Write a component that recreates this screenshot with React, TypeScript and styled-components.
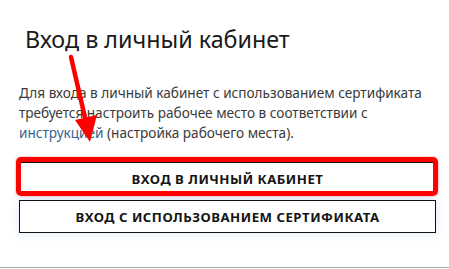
import React from "react";
import styled, { createGlobalStyle } from "styled-components";

const GlobalStyle = createGlobalStyle`
  html, body {
    margin: 0;
    padding: 0;
    background: #ffffff;
  }
  * {
    box-sizing: border-box;
  }
`;

const Page = styled.div`
  position: relative;
  width: 449px;
  height: 268px;
  padding: 24px 13px 0 19px;
  border-bottom: 1px solid #a8a8a8;
  font-family: "Noto Sans", "Open Sans", sans-serif;
  color: #333;
  overflow: hidden;
`;

const Title = styled.h1`
  margin: 0 0 29px 6px;
  font-size: 23.3px;
  line-height: 30px;
  font-weight: 400;
  color: #1a1a1a;
`;

const Text = styled.p`
  margin: 0 0 19px;
  font-size: 13.6px;
  line-height: 20px;
  color: #3a3a3a;
`;

const Link = styled.a`
  color: #386290;
  text-decoration: none;
`;

const Buttons = styled.div`
  display: flex;
  flex-direction: column;
  gap: 5px;
`;

const Marked = styled.div`
  position: relative;
`;

const RedFrame = styled.div`
  position: absolute;
  left: -3px;
  right: -2px;
  top: -5px;
  bottom: -1px;
  border: 5px solid #ff0000;
  border-radius: 5px;
  box-shadow: 0 0 2px rgba(255, 0, 0, 0.5);
  pointer-events: none;
`;

const Button = styled.button`
  display: flex;
  align-items: center;
  justify-content: center;
  width: 100%;
  height: 33px;
  padding: 0;
  border: 1px solid #111;
  background: #fff;
  box-shadow: 0 0 9px rgba(90, 140, 230, 0.22);
  font-family: "Noto Sans", "Open Sans", sans-serif;
  font-size: 13.2px;
  font-weight: 700;
  letter-spacing: 0.5px;
  text-transform: uppercase;
  color: #141414;
  cursor: pointer;
`;

const Arrow = styled.svg`
  position: absolute;
  left: 0;
  top: 0;
  pointer-events: none;
`;

export default function App() {
  return (
    <>
      <GlobalStyle />
      <Page>
        <Title>Вход в личный кабинет</Title>
        <Text>
          Для входа в личный кабинет с использованием сертификата требуется
          настроить рабочее место в соответствии с{" "}
          <Link href="#">инструкцией</Link> (настройка рабочего места).
        </Text>
        <Buttons>
          <Marked>
            <Button>Вход в личный кабинет</Button>
            <RedFrame />
          </Marked>
          <Button>Вход с использованием сертификата</Button>
        </Buttons>
        <Arrow width="449" height="268" viewBox="0 0 449 268">
          <line x1="71" y1="57" x2="86" y2="122" stroke="#ff0000" strokeWidth="4.5" strokeLinecap="round" />
          <polygon points="75,120 97,115 90,142" fill="#ff0000" />
        </Arrow>
      </Page>
    </>
  );
}
